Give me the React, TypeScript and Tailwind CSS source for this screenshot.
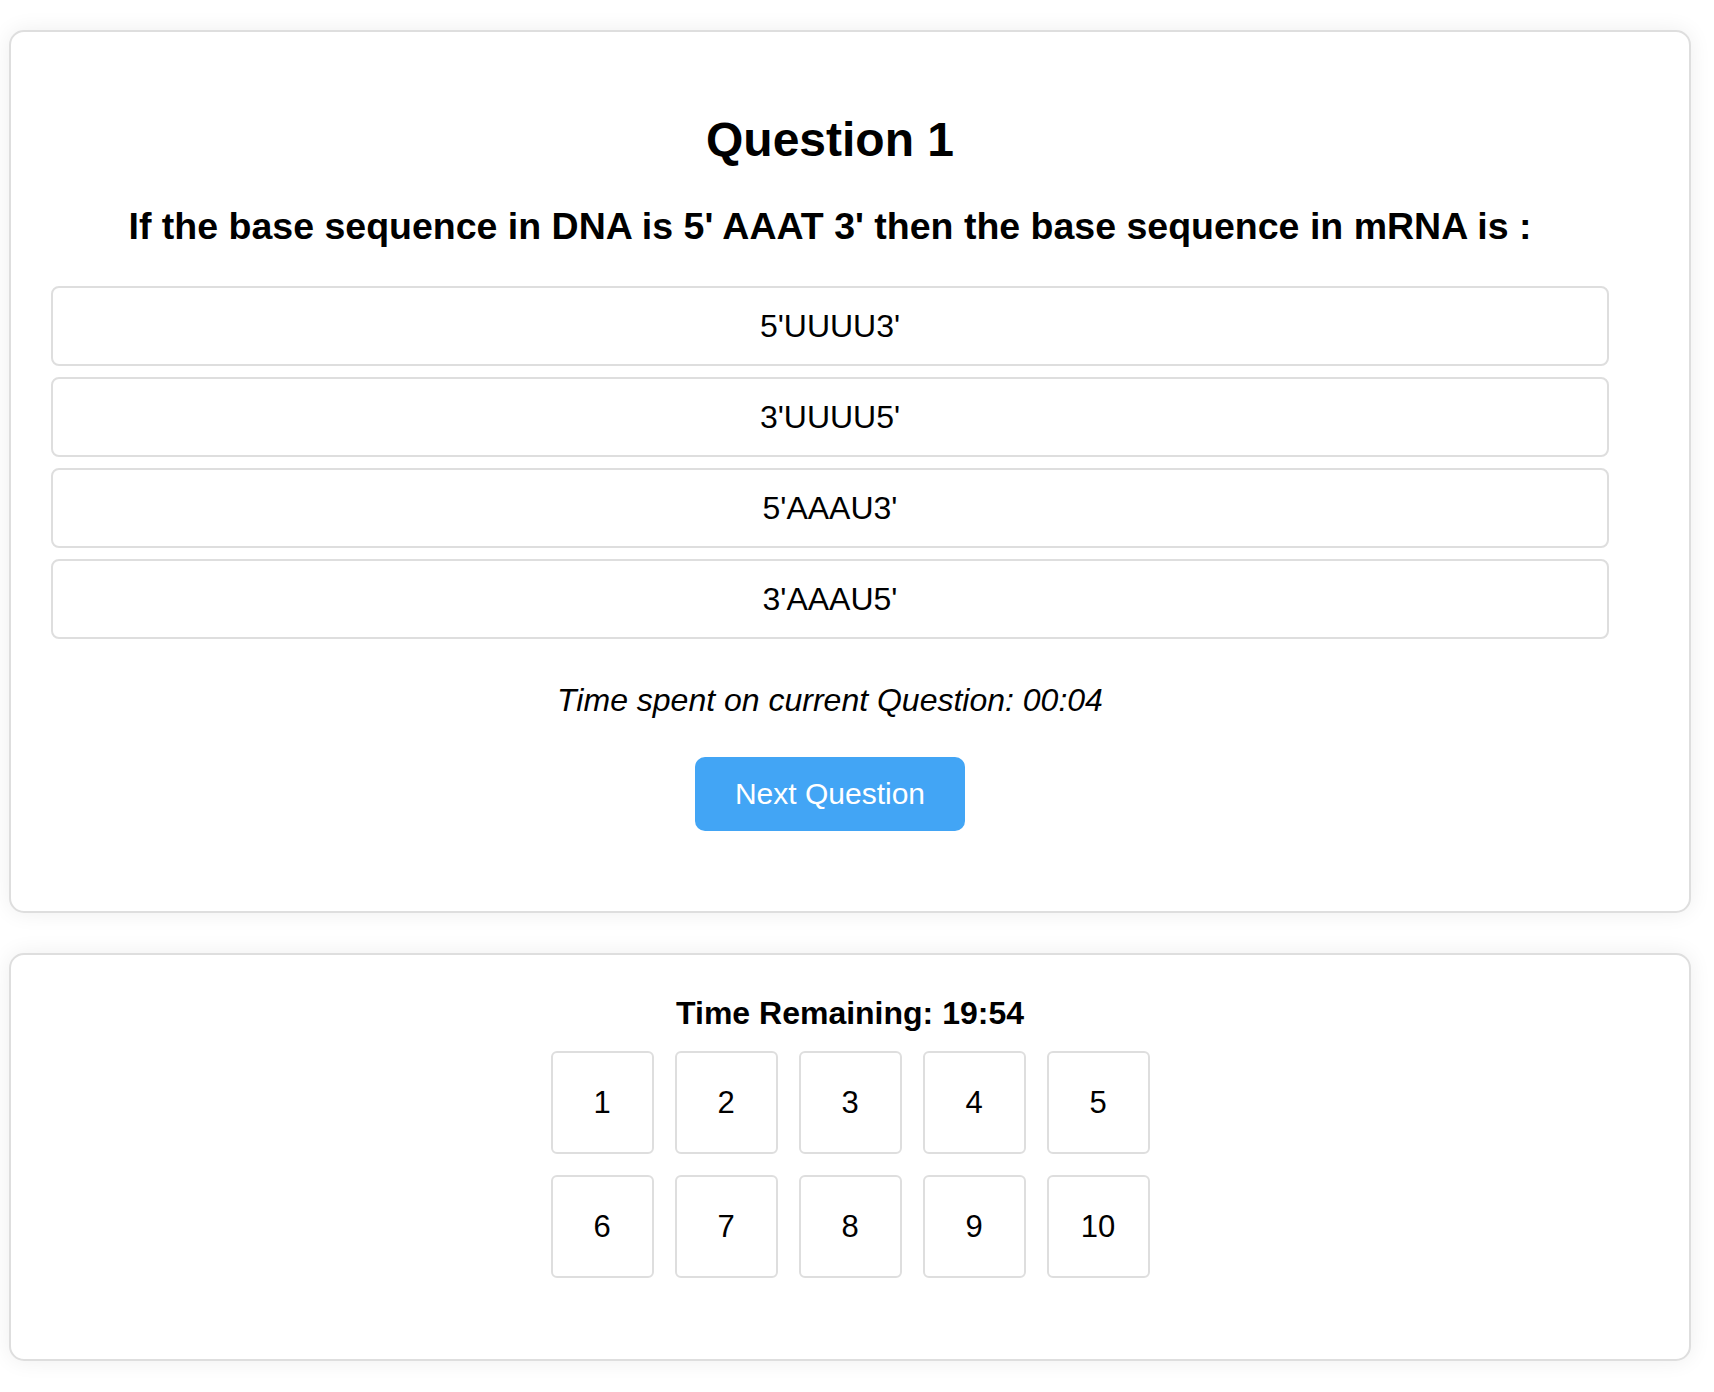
import { useEffect, useState } from "react";

const options = ["5'UUUU3'", "3'UUUU5'", "5'AAAU3'", "3'AAAU5'"];

const fmt = (s: number) =>
  `${String(Math.floor(s / 60)).padStart(2, "0")}:${String(s % 60).padStart(2, "0")}`;

export default function App() {
  const [selected, setSelected] = useState<number | null>(null);
  const [spent] = useState(4);
  const [remaining] = useState(20 * 60 - 6);
  const [current, setCurrent] = useState(1);

  useEffect(() => {
    setSelected(null);
  }, [current]);

  return (
    <div className="min-h-screen bg-white pt-[30px] pl-[9px] pb-[30px] font-['Liberation_Sans',Arial,sans-serif] text-black">
      {/* Question card */}
      <div className="w-[1682px] rounded-[15px] border-2 border-[#dedede] bg-white pt-[81px] pb-[80px] pl-[40px] pr-[80px] shadow-[0_0_22px_rgba(0,0,0,0.07)]">
        <h2 className="text-center text-[48px] leading-[54px] font-bold">Question {current}</h2>
        <p className="mt-[39px] text-center text-[37.5px] leading-[41px] font-bold">
          If the base sequence in DNA is 5' AAAT 3' then the base sequence in mRNA is :
        </p>

        <div className="mt-[39px] flex flex-col gap-[11px]">
          {options.map((opt, i) => (
            <button
              key={opt}
              onClick={() => setSelected(i)}
              className={
                "h-[80px] w-full rounded-[8px] border-2 text-center text-[32px] leading-[36px] " +
                (selected === i ? "border-[#42a5f5] bg-[#e3f2fd]" : "border-[#dedede] bg-white")
              }
            >
              {opt}
            </button>
          ))}
        </div>

        <p className="mt-[43px] text-center text-[32px] leading-[36px] italic">
          Time spent on current Question: {fmt(spent)}
        </p>

        <div className="mt-[39px] flex justify-center">
          <button
            onClick={() => setCurrent((c) => Math.min(c + 1, 10))}
            className="h-[74px] w-[270px] rounded-[10px] bg-[#42a5f5] text-[30px] leading-[34px] text-white"
          >
            Next Question
          </button>
        </div>
      </div>

      {/* Navigator card */}
      <div className="mt-[40px] w-[1682px] rounded-[15px] border-2 border-[#dedede] bg-white pt-[40px] pb-[81px] shadow-[0_0_22px_rgba(0,0,0,0.07)]">
        <p className="text-center text-[32px] leading-[36px] font-bold">Time Remaining: {fmt(remaining)}</p>
        <div className="mt-[20px] flex justify-center">
          <div className="grid grid-cols-5 gap-x-[21px] gap-y-[21px]">
            {Array.from({ length: 10 }, (_, i) => i + 1).map((n) => (
              <button
                key={n}
                onClick={() => setCurrent(n)}
                className="flex h-[103px] w-[103px] items-center justify-center rounded-[6px] border-2 border-[#dedede] bg-white text-[31px] leading-[34px]"
              >
                {n}
              </button>
            ))}
          </div>
        </div>
      </div>
    </div>
  );
}
